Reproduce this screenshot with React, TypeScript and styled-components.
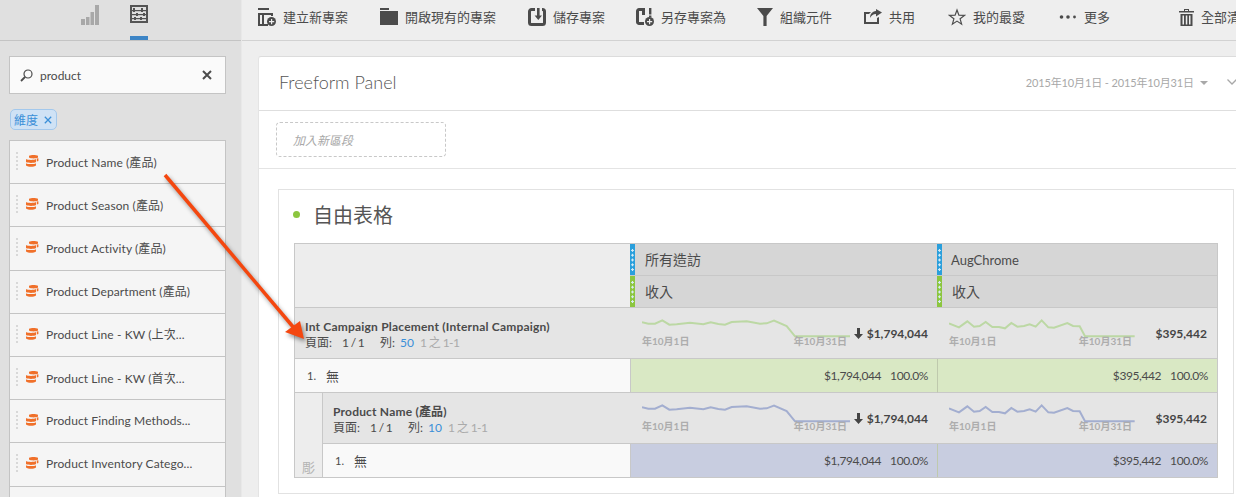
import { FC } from "react";
import styled, { createGlobalStyle } from "styled-components";

const FONT = `Lato, "Noto Sans CJK TC", sans-serif`;

const GlobalStyle = createGlobalStyle`
  html, body {
    margin: 0;
    padding: 0;
    background: #eeeeee;
  }
  body {
    font-family: ${FONT};
    color: #4b4b4b;
  }
`;

const Page = styled.div`
  position: relative;
  display: flex;
  width: 1236px;
  height: 497px;
  overflow: hidden;
`;

/* ---------- sidebar ---------- */

const Sidebar = styled.aside`
  flex: 0 0 241px;
  background: #e0e0e0;
  border-right: 1px solid #e8e8e8;
  box-sizing: content-box;
`;

const SideTabs = styled.div`
  display: flex;
  height: 40px;
  padding-left: 81px;
  gap: 31px;
  border-bottom: 1px solid #c4c4c4;
`;

const SideTab = styled.div<{ $active?: boolean }>`
  width: 18px;
  height: 40px;
  padding-top: 5px;
  box-sizing: border-box;
  border-bottom: 4px solid ${(p) => (p.$active ? "#3d85c6" : "transparent")};
  svg {
    display: block;
  }
`;

const SideBody = styled.div`
  padding: 15px 15px 0 9px;
`;

const SearchBox = styled.div`
  display: flex;
  align-items: center;
  height: 38px;
  box-sizing: border-box;
  padding: 0 13px 0 10px;
  background: #fafafa;
  border: 1px solid #c4c4c4;
  font-size: 12px;
  color: #4b4b4b;
  span {
    flex: 1;
    margin-left: 7px;
  }
`;

const Tag = styled.div`
  display: inline-flex;
  align-items: center;
  gap: 6px;
  height: 21px;
  box-sizing: border-box;
  margin: 15px 0 10px 1px;
  padding: 0 4px 0 3px;
  background: #cfe2f5;
  border: 1px solid #a3c8ec;
  border-radius: 5px;
  font-size: 12px;
  color: #3a8fd8;
`;

const ItemList = styled.div`
  border-top: 1px solid #c4c4c4;
`;

const Item = styled.div`
  display: flex;
  align-items: center;
  height: 43.2px;
  box-sizing: border-box;
  padding: 0 0 2px 6px;
  background: #f5f5f5;
  border: 1px solid #c4c4c4;
  border-top: 0;
  font-size: 12px;
  letter-spacing: 0.1px;
  color: #4b4b4b;
  white-space: nowrap;
`;

const Grip = styled.i`
  width: 0;
  height: 18px;
  margin-right: 8px;
  border-left: 2px dotted #d8d8d8;
`;

const ItemLabel = styled.span`
  margin-left: 7px;
`;

/* ---------- main ---------- */

const Main = styled.main`
  flex: 1;
  min-width: 0;
  background: #eeeeee;
`;

const Toolbar = styled.div`
  display: flex;
  align-items: center;
  height: 40px;
  padding-left: 16px;
  border-bottom: 1px solid #d2d2d2;
  white-space: nowrap;
`;

const Tool = styled.div<{ $w: number }>`
  flex: 0 0 ${(p) => p.$w}px;
  display: flex;
  align-items: center;
  gap: 7px;
  margin-top: -7px;
  font-size: 13px;
  color: #4b4b4b;
  svg {
    flex: none;
  }
`;

const Content = styled.div`
  padding: 15px 0 0 16px;
`;

const Panel = styled.section`
  background: #fff;
  border-top: 1px solid #dcdcdc;
  border-left: 1px solid #e4e4e4;
  border-radius: 3px 0 0 0;
  height: 460px;
`;

const PanelHeader = styled.header`
  display: flex;
  align-items: center;
  height: 54px;
  box-sizing: border-box;
  padding: 0 0 3px 20px;
  border-bottom: 1px solid #dedede;
`;

const PanelTitle = styled.h1`
  flex: 1;
  margin: 0;
  font-size: 18px;
  font-weight: 300;
  color: #555;
`;

const DateRange = styled.div`
  display: flex;
  align-items: center;
  font-size: 11px;
  letter-spacing: -0.13px;
  color: #a8a8a8;
  white-space: nowrap;
  margin-right: -1px;
`;

const Caret = styled.i`
  width: 0;
  height: 0;
  margin: 2px 19px 0 6px;
  border-left: 4px solid transparent;
  border-right: 4px solid transparent;
  border-top: 4px solid #a8a8a8;
`;

const SegmentRow = styled.div`
  height: 58px;
  box-sizing: border-box;
  padding: 11px 0 0 17px;
  border-bottom: 1px solid #e4e4e4;
`;

const SegmentDrop = styled.div`
  display: flex;
  align-items: center;
  width: 170px;
  height: 35px;
  box-sizing: border-box;
  padding-left: 16px;
  border: 1px dashed #c8c8c8;
  border-radius: 4px;
  font-size: 12px;
  font-style: italic;
  color: #a8a8a8;
`;

const PanelBody = styled.div`
  padding: 20px 2px 0 19px;
`;

const Card = styled.div`
  height: 305px;
  box-sizing: border-box;
  padding: 0 15px;
  border: 1px solid #e2e2e2;
`;

const CardTitle = styled.h2`
  display: flex;
  align-items: center;
  height: 53px;
  box-sizing: border-box;
  margin: 0 0 0 -1px;
  padding-bottom: 5px;
  font-size: 20px;
  font-weight: 400;
  color: #555;
  &::before {
    content: "";
    width: 7px;
    height: 7px;
    margin-right: 13px;
    border-radius: 50%;
    background: #8cc63f;
  }
`;

/* ---------- table ---------- */

const Table = styled.div`
  display: grid;
  grid-template-columns: 28px 307px 307px 280px;
  grid-template-rows: 32px 32px 51px 34px 51px 33px;
  width: 924px;
  box-sizing: border-box;
  border: 1px solid #c8c8c8;
`;

const HeadBlank = styled.div`
  grid-column: 1 / span 2;
  grid-row: 1 / span 2;
  background: #ededed;
  border-bottom: 1px solid #c8c8c8;
`;

const HeadCell = styled.div`
  display: flex;
  align-items: stretch;
  background: #d6d6d6;
  border-bottom: 1px solid #c8c8c8;
  min-width: 0;
`;

const ColorTab = styled.i<{ $color: string }>`
  flex: 0 0 5px;
  display: flex;
  align-items: center;
  background-color: ${(p) => p.$color};
  &::after {
    content: "";
    width: 5px;
    height: 24px;
    background-image: radial-gradient(circle, #d8ecf6 1.1px, transparent 1.4px);
    background-size: 5px 4.8px;
    background-repeat: repeat-y;
  }
`;

const HeadLabel = styled.span<{ $latin?: boolean }>`
  align-self: center;
  padding: 0 0 ${(p) => (p.$latin ? 0 : 2)}px ${(p) => (p.$latin ? 9 : 10)}px;
  font-size: ${(p) => (p.$latin ? 13 : 14)}px;
  color: #4b4b4b;
`;

const DimCell = styled.div<{ $span?: boolean }>`
  grid-column: ${(p) => (p.$span ? "1 / span 2" : "2")};
  display: flex;
  flex-direction: column;
  justify-content: center;
  padding: 3px 0 0 10px;
  background: #e5e5e5;
  border-bottom: 1px solid #c8c8c8;
  line-height: 16px;
  min-width: 0;
  white-space: nowrap;
`;

const DimName = styled.div`
  font-size: 12px;
  font-weight: 700;
  letter-spacing: 0.2px;
  color: #4b4b4b;
`;

const Pager = styled.div`
  display: flex;
  font-size: 12px;
  color: #4b4b4b;
`;

const PagerCount = styled.span`
  margin: 0 16px 0 10px;
  letter-spacing: -0.7px;
`;

const PagerSize = styled.span`
  margin: 0 6px 0 5px;
  color: #3a8fd8;
`;

const PagerRange = styled.span`
  letter-spacing: -0.6px;
  color: #aaaaaa;
`;

const MetricCell = styled.div<{ $pad: number }>`
  display: flex;
  justify-content: space-between;
  align-items: center;
  padding: 0 ${(p) => p.$pad}px 0 12px;
  background: #e5e5e5;
  border-bottom: 1px solid #c8c8c8;
  min-width: 0;
`;

const Trend = styled.div<{ $w: number }>`
  width: ${(p) => p.$w}px;
  height: 40px;
  svg {
    display: block;
  }
`;

const TrendDates = styled.div`
  display: flex;
  justify-content: space-between;
  padding-right: 3px;
  margin-top: -10px;
  font-size: 10px;
  font-weight: 700;
  line-height: 14px;
  color: #adadad;
  white-space: nowrap;
`;

const Total = styled.div`
  display: flex;
  align-items: center;
  gap: 4px;
  font-size: 12px;
  font-weight: 700;
  color: #444;
  white-space: nowrap;
`;

const RowCell = styled.div<{ $span?: boolean; $pad: number }>`
  grid-column: ${(p) => (p.$span ? "1 / span 2" : "2")};
  display: flex;
  align-items: center;
  padding-left: ${(p) => p.$pad}px;
  background: #f9f9f9;
  font-size: 13px;
  color: #4b4b4b;
  border-bottom: 1px solid #c8c8c8;
  span:first-child {
    width: 19px;
    font-size: 11px;
  }
`;

const LastRow = styled(RowCell)`
  border-bottom: 0;
`;

const ValueCell = styled.div<{ $bg: string; $divider?: boolean; $last?: boolean }>`
  display: flex;
  justify-content: flex-end;
  align-items: center;
  gap: 9px;
  padding-right: 9px;
  background: ${(p) => p.$bg};
  border-left: 1px solid ${(p) => (p.$divider ? "#bfc9ad" : "#c8c8c8")};
  border-bottom: ${(p) => (p.$last ? 0 : "1px solid #c8c8c8")};
  font-size: 12px;
  letter-spacing: -0.4px;
  color: #4b4b4b;
`;

const Gutter = styled.div`
  grid-column: 1;
  grid-row: 5 / span 2;
  display: flex;
  align-items: flex-end;
  padding: 0 0 2px 7px;
  background: #ededed;
  border-right: 1px solid #c8c8c8;
  font-size: 13px;
  line-height: 15px;
  color: #b4b4b4;
`;

const Arrow = styled.svg`
  position: absolute;
  left: 155px;
  top: 165px;
  filter: drop-shadow(2px 3px 2px rgba(0, 0, 0, 0.4));
  pointer-events: none;
`;

/* ---------- icons ---------- */

const DARK = "#4b4b4b";

const BarsIcon = () => (
  <svg width="18" height="20" viewBox="0 0 18 20" fill="#a8a8a8">
    <rect x="0" y="14" width="4" height="6" />
    <rect x="5" y="12" width="3.5" height="8" />
    <rect x="9.5" y="7" width="3.5" height="13" />
    <rect x="14" y="0" width="4" height="20" />
  </svg>
);

const AbacusIcon = () => (
  <svg width="18" height="19" viewBox="0 0 18 19" fill="#555">
    <path d="M0 0h18v18H0zM2 2v14h14V2z" fillRule="evenodd" />
    <rect x="2" y="5" width="14" height="1.2" />
    <rect x="2" y="9" width="14" height="1.2" />
    <rect x="2" y="13" width="14" height="1.2" />
    <rect x="3" y="3" width="2" height="4" />
    <rect x="11" y="3" width="2" height="4" />
    <rect x="6" y="8" width="2" height="3" />
    <rect x="13" y="8" width="2" height="3" />
    <rect x="4" y="12" width="2" height="3" />
    <rect x="10" y="12" width="2" height="3" />
  </svg>
);

const SearchIcon = () => (
  <svg width="13" height="13" viewBox="0 0 13 13" fill="none" stroke="#4b4b4b">
    <circle cx="8" cy="5" r="4" strokeWidth="1.2" />
    <path d="M5 8L1 12" strokeWidth="1.8" />
  </svg>
);

const CloseIcon: FC<{ size: number; color: string; weight: number }> = ({ size, color, weight }) => (
  <svg width={size} height={size} viewBox="0 0 10 10" stroke={color} strokeWidth={weight} fill="none">
    <path d="M1 1l8 8M9 1l-8 8" />
  </svg>
);

const DbIcon = () => (
  <svg width="13" height="12" viewBox="0 0 13 12" fill="#f0702a">
    <path d="M3 0.8C5 -0.2 10 -0.2 12 0.8V2.6C10 3.8 5 3.8 3 2.6z" />
    <path d="M0 4C2 5.2 8 5.2 10 4V7C8 8.2 2 8.2 0 7z" />
    <path d="M10.8 3.6L12.4 3.2V6L10.8 6.6z" />
    <path d="M0 8.2C2 9.4 8 9.4 10 8.2V10.4C8 12.2 2 12.2 0 10.4z" />
  </svg>
);

const NewIcon = () => (
  <svg width="18" height="18" viewBox="0 0 18 18" fill={DARK}>
    <rect x="0" y="0" width="11" height="2" />
    <path d="M0 5h15v3h-2V7H6v9h4v2H0zM2 7v9h2V7z" fillRule="evenodd" />
    <circle cx="13.5" cy="13.5" r="4.5" />
    <path d="M13 11h1.2v2h2v1.2h-2v2H13v-2h-2V13h2z" fill="#eee" />
  </svg>
);

const FolderIcon = () => (
  <svg width="18" height="17" viewBox="0 0 18 17" fill={DARK}>
    <rect x="0" y="0" width="9" height="2" />
    <rect x="0" y="3" width="18" height="14" />
  </svg>
);

const SaveIcon = () => (
  <svg width="18" height="18" viewBox="0 0 18 18">
    <path d="M7 1.5H3.5a2 2 0 0 0-2 2v11a2 2 0 0 0 2 2h11a2 2 0 0 0 2-2v-11a2 2 0 0 0-2-2H14" fill="none" stroke={DARK} strokeWidth="3" />
    <path d="M9 0h2.6v7.6H14L10.3 12 6.6 7.6H9z" fill={DARK} />
  </svg>
);

const SaveAsIcon = () => (
  <svg width="18" height="18" viewBox="0 0 18 18">
    <path d="M8 1.5H3a1.5 1.5 0 0 0-1.5 1.5v11A1.5 1.5 0 0 0 3 15.5h5" fill="none" stroke={DARK} strokeWidth="3" />
    <path d="M6 0h3v7H6z" fill={DARK} />
    <rect x="13" y="0" width="2.4" height="6.5" fill={DARK} />
    <rect x="13" y="7.5" width="2.4" height="1.5" fill={DARK} />
    <circle cx="13.5" cy="13.5" r="4.5" fill={DARK} />
    <path d="M13 11h1.2v2h2v1.2h-2v2H13v-2h-2V13h2z" fill="#eee" />
  </svg>
);

const FilterIcon = () => (
  <svg width="16" height="18" viewBox="0 0 16 18" fill={DARK}>
    <path d="M0 0h16L9.6 8V18H6.4V8z" />
  </svg>
);

const ShareIcon = () => (
  <svg width="18" height="15" viewBox="0 0 18 15" fill={DARK}>
    <path d="M0 3h7L5 5H2v8h11V9l2-1v7H0z" />
    <path d="M12 0l6 3.5-6 4V5C9 5 7 7 6 9c0-4 2-6.5 6-7z" />
  </svg>
);

const StarIcon = () => (
  <svg width="18" height="18" viewBox="0 0 18 18" fill="none" stroke={DARK} strokeWidth="1.2">
    <path d="M9 2l1.9 5.2 5.6.2-4.4 3.4 1.5 5.4L9 13.1l-4.6 3.1 1.5-5.4-4.4-3.4 5.6-.2z" />
  </svg>
);

const MoreIcon = () => (
  <svg width="18" height="6" viewBox="0 0 18 6" fill={DARK}>
    <circle cx="2.5" cy="3" r="1.8" />
    <circle cx="9" cy="3" r="1.8" />
    <circle cx="15.5" cy="3" r="1.4" />
  </svg>
);

const TrashIcon = () => (
  <svg width="15" height="18" viewBox="0 0 15 18" fill={DARK}>
    <rect x="0" y="3" width="15" height="1.5" />
    <path d="M5 3V1h5v2H9V2H6v1z" />
    <path d="M1.5 6h12v12h-12zM3.5 7.5v9h1.5v-9zM6.8 7.5v9h1.5v-9zM10 7.5v9h1.5v-9z" fillRule="evenodd" />
  </svg>
);

const Chevron = () => (
  <svg width="10" height="6" viewBox="0 0 10 6" fill="none" stroke="#a8a8a8" strokeWidth="1.3">
    <path d="M0.5 0.5L5 5 9.5 0.5" />
  </svg>
);

const DownArrow = () => (
  <svg width="9" height="11" viewBox="0 0 9 11" fill="#444">
    <path d="M3 0h3v6h3L4.5 11 0 6h3z" />
  </svg>
);

/* ---------- data ---------- */

const TREND_A =
  "66,245 85,249 105,249 127,239 148,252 170,251 210,246 250,251 272,245 295,250 315,252 335,244 380,242 420,249 440,248 462,240 500,256 525,287 690,287";
const TREND_B =
  "90,248 120,260 145,242 165,258 182,256 200,244 220,259 240,259 258,263 277,247 295,258 315,256 332,251 350,258 368,239 388,260 405,261 445,247 462,256 482,257 498,287 647,287";

const PRODUCTS = [
  "Product Name (產品)",
  "Product Season (產品)",
  "Product Activity (產品)",
  "Product Department (產品)",
  "Product Line - KW (上次...",
  "Product Line - KW (首次...",
  "Product Finding Methods...",
  "Product Inventory Catego...",
];

const TOOLS = [
  { icon: <NewIcon />, label: "建立新專案", w: 122 },
  { icon: <FolderIcon />, label: "開啟現有的專案", w: 148 },
  { icon: <SaveIcon />, label: "儲存專案", w: 108 },
  { icon: <SaveAsIcon />, label: "另存專案為", w: 121 },
  { icon: <FilterIcon />, label: "組織元件", w: 107 },
  { icon: <ShareIcon />, label: "共用", w: 84 },
  { icon: <StarIcon />, label: "我的最愛", w: 111 },
  { icon: <MoreIcon />, label: "更多", w: 120 },
  { icon: <TrashIcon />, label: "全部清除", w: 100 },
];

const Spark: FC<{ points: string; first: number; width: number; color: string }> = ({
  points,
  first,
  width,
  color,
}) => (
  <svg width={width} height="31" viewBox={`${first} 217 ${width * 3} 93`}>
    <polyline points={points} fill="none" stroke={color} strokeWidth="6" />
  </svg>
);

const Metric: FC<{ points: string; first: number; w: number; color: string; pad: number; value: string; down?: boolean }> = ({
  points,
  first,
  w,
  color,
  pad,
  value,
  down,
}) => (
  <MetricCell $pad={pad}>
    <Trend $w={w}>
      <Spark points={points} first={first} width={w} color={color} />
      <TrendDates>
        <span>年10月1日</span>
        <span>年10月31日</span>
      </TrendDates>
    </Trend>
    <Total>
      {down && <DownArrow />}
      {value}
    </Total>
  </MetricCell>
);

const Paging: FC<{ size: number }> = ({ size }) => (
  <Pager>
    頁面:
    <PagerCount>1 / 1</PagerCount>
    列:
    <PagerSize>{size}</PagerSize>
    <PagerRange>1 之 1-1</PagerRange>
  </Pager>
);

const App: FC = () => {
  return (
    <Page>
      <GlobalStyle />
      <Sidebar>
        <SideTabs>
          <SideTab>
            <BarsIcon />
          </SideTab>
          <SideTab $active>
            <AbacusIcon />
          </SideTab>
        </SideTabs>
        <SideBody>
          <SearchBox>
            <SearchIcon />
            <span>product</span>
            <CloseIcon size={10} color="#4b4b4b" weight={2} />
          </SearchBox>
          <Tag>
            維度
            <CloseIcon size={8} color="#3a8fd8" weight={1.6} />
          </Tag>
          <ItemList>
            {PRODUCTS.map((name) => (
              <Item key={name}>
                <Grip />
                <DbIcon />
                <ItemLabel>{name}</ItemLabel>
              </Item>
            ))}
            <Item />
          </ItemList>
        </SideBody>
      </Sidebar>
      <Main>
        <Toolbar>
          {TOOLS.map((t) => (
            <Tool key={t.label} $w={t.w}>
              {t.icon}
              {t.label}
            </Tool>
          ))}
        </Toolbar>
        <Content>
          <Panel>
            <PanelHeader>
              <PanelTitle>Freeform Panel</PanelTitle>
              <DateRange>
                2015年10月1日 - 2015年10月31日
                <Caret />
                <Chevron />
              </DateRange>
            </PanelHeader>
            <SegmentRow>
              <SegmentDrop>加入新區段</SegmentDrop>
            </SegmentRow>
            <PanelBody>
              <Card>
                <CardTitle>自由表格</CardTitle>
                <Table>
                  <HeadBlank />
                  <HeadCell>
                    <ColorTab $color="#2a9fdc" />
                    <HeadLabel>所有造訪</HeadLabel>
                  </HeadCell>
                  <HeadCell>
                    <ColorTab $color="#2a9fdc" />
                    <HeadLabel $latin>AugChrome</HeadLabel>
                  </HeadCell>
                  <HeadCell>
                    <ColorTab $color="#8cc63f" />
                    <HeadLabel>收入</HeadLabel>
                  </HeadCell>
                  <HeadCell>
                    <ColorTab $color="#8cc63f" />
                    <HeadLabel>收入</HeadLabel>
                  </HeadCell>

                  <DimCell $span>
                    <DimName>Int Campaign Placement (Internal Campaign)</DimName>
                    <Paging size={50} />
                  </DimCell>
                  <Metric points={TREND_A} first={66} w={208} color="#bcd8a4" pad={9} value="$1,794,044" down />
                  <Metric points={TREND_B} first={90} w={186} color="#bcd8a4" pad={10} value="$395,442" />

                  <RowCell $span $pad={12}>
                    <span>1.</span>
                    <span>無</span>
                  </RowCell>
                  <ValueCell $bg="#d9e8c4">
                    <span>$1,794,044</span>
                    <span>100.0%</span>
                  </ValueCell>
                  <ValueCell $bg="#d9e8c4" $divider>
                    <span>$395,442</span>
                    <span>100.0%</span>
                  </ValueCell>

                  <Gutter>彫</Gutter>
                  <DimCell>
                    <DimName>Product Name (產品)</DimName>
                    <Paging size={10} />
                  </DimCell>
                  <Metric points={TREND_A} first={66} w={208} color="#a3aed0" pad={9} value="$1,794,044" down />
                  <Metric points={TREND_B} first={90} w={186} color="#a3aed0" pad={10} value="$395,442" />

                  <LastRow $pad={12}>
                    <span>1.</span>
                    <span>無</span>
                  </LastRow>
                  <ValueCell $bg="#c8cde0" $last>
                    <span>$1,794,044</span>
                    <span>100.0%</span>
                  </ValueCell>
                  <ValueCell $bg="#c8cde0" $divider $last>
                    <span>$395,442</span>
                    <span>100.0%</span>
                  </ValueCell>
                </Table>
              </Card>
            </PanelBody>
          </Panel>
        </Content>
      </Main>
      <Arrow width="160" height="185" viewBox="155 165 160 185">
        <path d="M165 175L294 328" stroke="#f4470f" strokeWidth="3.5" fill="none" />
        <path d="M285 332L300 321L304 339z" fill="#f4470f" />
      </Arrow>
    </Page>
  );
};

export default App;
